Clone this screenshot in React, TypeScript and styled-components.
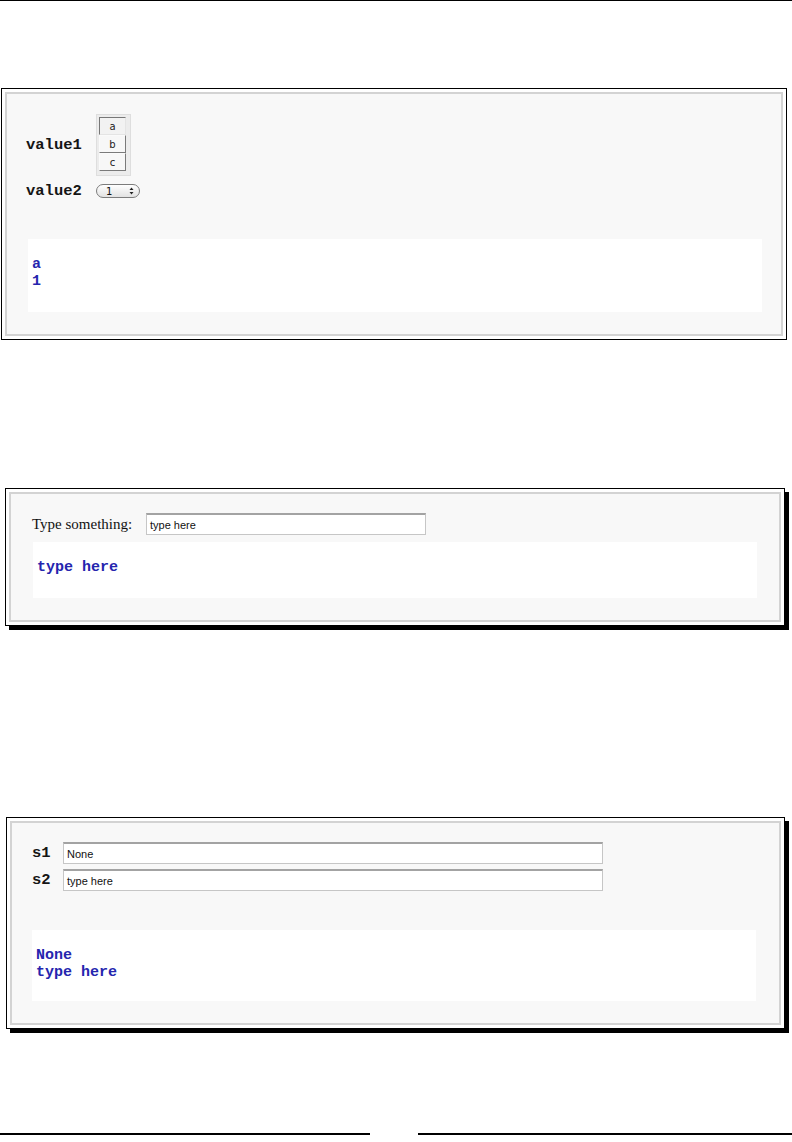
import React from "react";
import styled, { createGlobalStyle } from "styled-components";

const Global = createGlobalStyle`
  html, body { margin: 0; padding: 0; background: #fff; }
  body { font-family: "Liberation Sans", Arial, sans-serif; }
  * { box-sizing: border-box; }
`;

const Page = styled.div`
  width: 792px;
  height: 1142px;
  display: flex;
  flex-direction: column;
  overflow: hidden;
`;

const TopRule = styled.div`
  height: 1px;
  background: #000;
  flex-shrink: 0;
`;

const Figure = styled.div<{ $top: number; $left: number; $width: number; $shadow?: boolean }>`
  margin-top: ${(p) => p.$top}px;
  margin-left: ${(p) => p.$left}px;
  width: ${(p) => p.$width}px;
  border: 1px solid #000;
  padding: 3px;
  background: #fff;
  flex-shrink: 0;
  box-shadow: ${(p) => (p.$shadow ? "4px 4px 0 #000" : "none")};
`;

const Frame = styled.div<{ $pt: number; $pl: number; $pb: number }>`
  border: 2px solid #d3d3d3;
  background: #f8f8f8;
  padding: ${(p) => `${p.$pt}px 0 ${p.$pb}px ${p.$pl}px`};
  display: flex;
  flex-direction: column;
`;

const Row = styled.div<{ $h: number; $mt?: number }>`
  display: flex;
  align-items: center;
  height: ${(p) => p.$h}px;
  margin-top: ${(p) => p.$mt ?? 0}px;
`;

const MonoLabel = styled.span<{ $w: number }>`
  width: ${(p) => p.$w}px;
  font-family: "Liberation Mono", "Courier New", monospace;
  font-weight: bold;
  font-size: 15.5px;
  color: #151515;
  flex-shrink: 0;
`;

const SerifLabel = styled.span`
  width: 114px;
  flex-shrink: 0;
  font-family: "Liberation Serif", "Times New Roman", serif;
  font-size: 15px;
  color: #111;
`;

const ButtonGroup = styled.div`
  width: 35px;
  height: 62px;
  background: #ececec;
  border: 1px solid #dedede;
  padding: 2px 0 0 2px;
  display: flex;
  flex-direction: column;
`;

const Toggle = styled.div<{ $pressed?: boolean }>`
  width: 27px;
  height: 18px;
  display: flex;
  align-items: center;
  justify-content: center;
  font-family: "DejaVu Sans", "Liberation Sans", sans-serif;
  font-size: 10px;
  color: #222;
  background: ${(p) => (p.$pressed ? "#f2f2f2" : "#f7f7f7")};
  border-style: solid;
  border-width: 1px;
  border-color: ${(p) =>
    p.$pressed ? "#777 #e4e4e4 #e4e4e4 #777" : "#fafafa #7a7a7a #7a7a7a #fafafa"};
`;

const SelectBox = styled.div`
  width: 44px;
  height: 14px;
  border: 1px solid #7c7c7c;
  border-radius: 7px;
  background: linear-gradient(#ffffff, #e2e2e2);
  display: flex;
  align-items: center;
  justify-content: space-between;
  padding: 0 5px 0 9px;
  font-family: "DejaVu Sans", "Liberation Sans", sans-serif;
  font-size: 10px;
  color: #111;
`;

const TextInput = styled.div<{ $w: number }>`
  width: ${(p) => p.$w}px;
  height: 22px;
  background: #fff;
  border: 1px solid #c6c6c6;
  border-top: 2px solid #a3a3a3;
  display: flex;
  align-items: center;
  padding: 0 3px;
  font-family: "Liberation Sans", Arial, sans-serif;
  font-size: 11px;
  color: #111;
`;

const Output = styled.div<{ $mt: number; $ml: number; $w: number; $h: number }>`
  margin-top: ${(p) => p.$mt}px;
  margin-left: ${(p) => p.$ml}px;
  width: ${(p) => p.$w}px;
  height: ${(p) => p.$h}px;
  background: #fff;
  padding: 18px 4px 0;
  font-family: "Liberation Mono", "Courier New", monospace;
  font-weight: bold;
  font-size: 15px;
  line-height: 16.5px;
  color: #2525ae;
  white-space: pre;
`;

const InputStack = styled.div`
  display: flex;
  flex-direction: column;
  gap: 5px;
`;

const Footer = styled.div`
  margin-top: 104px;
  display: flex;
  justify-content: space-between;
  flex-shrink: 0;
`;

const FooterRule = styled.div<{ $w: number }>`
  width: ${(p) => p.$w}px;
  height: 2px;
  background: #000;
`;

const Arrows = () => (
  <svg width="5" height="8" viewBox="0 0 5 8">
    <path d="M2.5 0.5 L4.5 3 L0.5 3 Z" fill="#222" />
    <path d="M2.5 7.5 L4.5 5 L0.5 5 Z" fill="#222" />
  </svg>
);

export default function App() {
  return (
    <Page>
      <Global />
      <TopRule />

      <Figure $top={87} $left={1} $width={786}>
        <Frame $pt={20} $pl={19} $pb={22}>
          <Row $h={62}>
            <MonoLabel $w={70}>value1</MonoLabel>
            <ButtonGroup>
              <Toggle $pressed>a</Toggle>
              <Toggle>b</Toggle>
              <Toggle>c</Toggle>
            </ButtonGroup>
          </Row>
          <Row $h={14} $mt={8}>
            <MonoLabel $w={70}>value2</MonoLabel>
            <SelectBox>
              <span>1</span>
              <Arrows />
            </SelectBox>
          </Row>
          <Output $mt={41} $ml={2} $w={734} $h={73}>{"a\n1"}</Output>
        </Frame>
      </Figure>

      <Figure $top={148} $left={5} $width={780} $shadow>
        <Frame $pt={19} $pl={21} $pb={22}>
          <Row $h={22}>
            <SerifLabel>Type something:</SerifLabel>
            <TextInput $w={280}>type here</TextInput>
          </Row>
          <Output $mt={7} $ml={1} $w={724} $h={56}>type here</Output>
        </Frame>
      </Figure>

      <Figure $top={191} $left={6} $width={779} $shadow>
        <Frame $pt={19} $pl={20} $pb={22}>
          <InputStack>
            <Row $h={22}>
              <MonoLabel $w={31}>s1</MonoLabel>
              <TextInput $w={540}>None</TextInput>
            </Row>
            <Row $h={22}>
              <MonoLabel $w={31}>s2</MonoLabel>
              <TextInput $w={540}>type here</TextInput>
            </Row>
          </InputStack>
          <Output $mt={39} $ml={0} $w={724} $h={71}>{"None\ntype here"}</Output>
        </Frame>
      </Figure>

      <Footer>
        <FooterRule $w={370} />
        <FooterRule $w={374} />
      </Footer>
    </Page>
  );
}
